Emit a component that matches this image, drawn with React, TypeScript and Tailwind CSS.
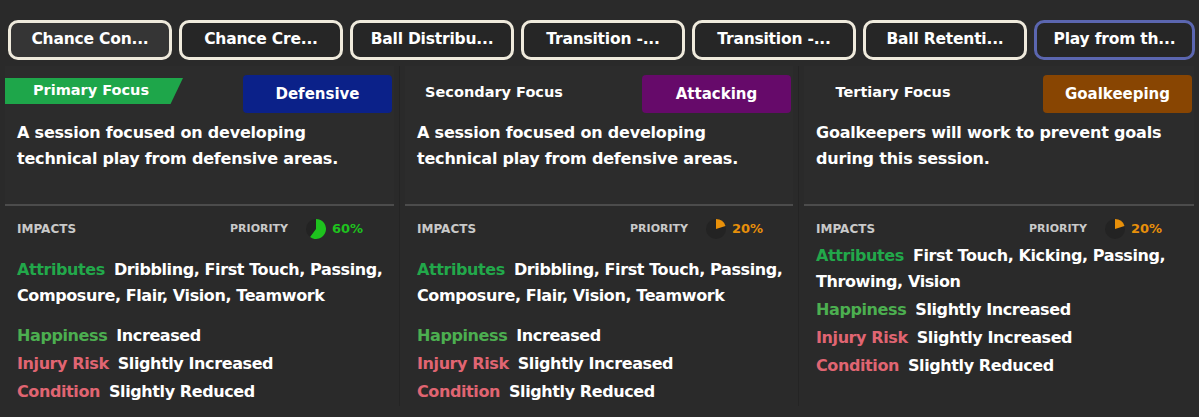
import React from "react";

const tabs = [
  "Chance Con...",
  "Chance Cre...",
  "Ball Distribu...",
  "Transition -...",
  "Transition -...",
  "Ball Retenti...",
  "Play from th...",
];

function Pie({ pct, color }: { pct: number; color: string }) {
  const r = 10;
  const a = (pct / 100) * 2 * Math.PI;
  const x = 11 + r * Math.sin(a);
  const y = 11 - r * Math.cos(a);
  const large = pct > 50 ? 1 : 0;
  return (
    <svg width="22" height="22" viewBox="0 0 22 22">
      <circle cx="11" cy="11" r="10" fill="#232323" />
      <path d={`M11 11 L11 1 A10 10 0 ${large} 1 ${x} ${y} Z`} fill={color} />
    </svg>
  );
}

type Panel = {
  label: string;
  flag: boolean;
  badge: string;
  badgeBg: string;
  desc: string[];
  pct: number;
  pctColor: string;
  attrs: [string, string];
  happiness: string;
  tight: boolean;
};

const panels: Panel[] = [
  {
    label: "Primary Focus",
    flag: true,
    badge: "Defensive",
    badgeBg: "bg-[#0b2189]",
    desc: ["A session focused on developing", "technical play from defensive areas."],
    pct: 60,
    pctColor: "#1ec21e",
    attrs: ["Dribbling, First Touch, Passing,", "Composure, Flair, Vision, Teamwork"],
    happiness: "Increased",
    tight: false,
  },
  {
    label: "Secondary Focus",
    flag: false,
    badge: "Attacking",
    badgeBg: "bg-[#660a6a]",
    desc: ["A session focused on developing", "technical play from defensive areas."],
    pct: 20,
    pctColor: "#e8900a",
    attrs: ["Dribbling, First Touch, Passing,", "Composure, Flair, Vision, Teamwork"],
    happiness: "Increased",
    tight: false,
  },
  {
    label: "Tertiary Focus",
    flag: false,
    badge: "Goalkeeping",
    badgeBg: "bg-[#884502]",
    desc: ["Goalkeepers will work to prevent goals", "during this session."],
    pct: 20,
    pctColor: "#e8900a",
    attrs: ["First Touch, Kicking, Passing,", "Throwing, Vision"],
    happiness: "Slightly Increased",
    tight: true,
  },
];

function Row({ label, color, value }: { label: string; color: string; value: string }) {
  return (
    <div className="flex gap-[9px] whitespace-nowrap">
      <span className={color}>{label}</span>
      <span>{value}</span>
    </div>
  );
}

function PanelView({ p, last }: { p: Panel; last: boolean }) {
  return (
    <div className={`flex flex-col ${last ? "" : "border-r border-[#242424]"}`}>
      <div className="bg-[#2c2c2c] mx-[5px] h-[138px] flex flex-col">
        <div className="flex items-start justify-between h-[38px] mt-[9px] pr-[2px]">
          {p.flag ? (
            <div
              className="mt-[3px] h-[26px] w-[178px] bg-[#1ea64a] flex items-center justify-center pr-[6px] text-white text-[14.5px] font-bold"
              style={{ clipPath: "polygon(0 0, 100% 0, 93% 100%, 0 100%)" }}
            >
              Primary Focus
            </div>
          ) : (
            <div className="mt-[5px] h-[26px] w-[178px] flex items-center justify-center text-white text-[14.5px] font-bold">
              {p.label}
            </div>
          )}
          <div
            className={`${p.badgeBg} w-[149px] h-[38px] rounded-[4px] flex items-center justify-center text-white text-[15px] font-bold`}
          >
            {p.badge}
          </div>
        </div>
        <div className="pl-[12px] pt-[7px] text-white text-[16px] font-bold leading-[26px] tracking-[-0.2px]">
          {p.desc.map((d, i) => (
            <div key={i}>{d}</div>
          ))}
        </div>
      </div>
      <div className="mx-[5px] h-[2px] bg-[#4c4c4c]" />
      <div className="px-[17px] pt-[12px]">
        <div className="flex items-center h-[22px] font-bold text-[#c9c9c9]">
          <div className="w-[213px] text-[12px]">IMPACTS</div>
          <div className="w-[75px] text-[11px]">PRIORITY</div>
          <Pie pct={p.pct} color={p.pctColor} />
          <div className="ml-[5px] text-[13px]" style={{ color: p.pctColor }}>
            {p.pct}%
          </div>
        </div>
        <div
          className={`text-[16px] font-bold leading-[26px] text-white tracking-[-0.4px] ${
            p.tight ? "mt-[3px]" : "mt-[17px]"
          }`}
        >
          <Row label="Attributes" color="text-[#22a84a]" value={p.attrs[0]} />
          <div className="whitespace-nowrap">{p.attrs[1]}</div>
        </div>
        <div
          className={`text-[16px] font-bold leading-[28px] text-white tracking-[-0.4px] ${
            p.tight ? "mt-[1px]" : "mt-[13px]"
          }`}
        >
          <Row label="Happiness" color="text-[#4caf50]" value={p.happiness} />
          <Row label="Injury Risk" color="text-[#e06572]" value="Slightly Increased" />
          <Row label="Condition" color="text-[#e06572]" value="Slightly Reduced" />
        </div>
      </div>
    </div>
  );
}

export default function App() {
  return (
    <div
      className="w-[1199px] h-[417px] bg-[#2a2a2a] overflow-hidden"
      style={{ fontFamily: "'DejaVu Sans', 'Noto Sans', sans-serif" }}
    >
      <div className="flex gap-[7px] pl-[8px] pt-[20px]">
        {tabs.map((t, i) => (
          <div
            key={i}
            className={`h-[40px] rounded-[10px] border-[3px] flex items-center justify-center text-white text-[15.5px] font-bold tracking-[-0.2px] ${
              i === 6 ? "border-[#5b66b0] w-[161px]" : "border-[#efeadc] w-[164px]"
            } ${i === 0 ? "bg-[#353535]" : "bg-[#262626]"}`}
          >
            {t}
          </div>
        ))}
      </div>
      <div className="grid grid-cols-[400px_399px_400px] mt-[6px]">
        {panels.map((p, i) => (
          <PanelView key={i} p={p} last={i === 2} />
        ))}
      </div>
    </div>
  );
}
